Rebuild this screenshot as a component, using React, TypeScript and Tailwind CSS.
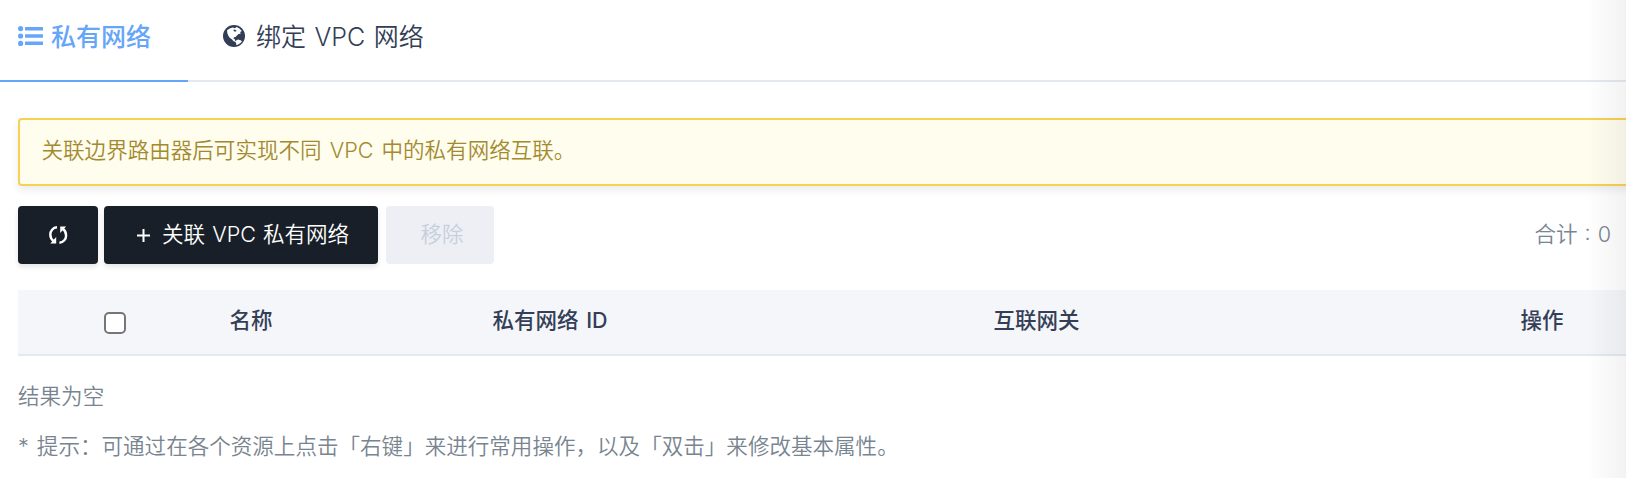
const columns = [
  { label: '名称', width: 'w-[263px]' },
  { label: '私有网络 ID', width: 'w-[501px]' },
  { label: '互联网关', width: 'w-[527px]' },
  { label: '操作', width: 'w-[105px]' },
];

function ListIcon() {
  return (
    <svg className="mt-[5px] mr-2 h-5 w-[25px]" viewBox="0 0 25 20" fill="currentColor">
      <circle cx="2.6" cy="2.6" r="2.6" />
      <circle cx="2.6" cy="10" r="2.6" />
      <circle cx="2.6" cy="17.4" r="2.6" />
      <rect x="7" y="1" width="18" height="3.6" rx="0.5" />
      <rect x="7" y="8.2" width="18" height="3.6" rx="0.5" />
      <rect x="7" y="15.4" width="18" height="3.6" rx="0.5" />
    </svg>
  );
}

function GlobeIcon() {
  return (
    <svg className="mt-1 mr-[11px] size-[22px]" viewBox="0 0 22 22">
      <circle cx="11" cy="11" r="11" fill="#323e56" />
      <path
        fill="#fff"
        d="M4 5.2 7.2 3.3 10 2.4l1.8.8 2-1.2 2.6 1.4 2.4 2.6-1.6.9.4 1.9-2.1.3-1.3 1.2-1.7 1.7-1.5.3-.6 1.2 1.5.7.2 1.5 1.4.6-.4.8-2.5-.8-1.8-2-2.1-1.5-1.5-2.2-.8-2.4z"
      />
      <path fill="#fff" d="m13 15.6 2-1 2.6.6 1.4 1-1.7 2-2.6 1.5-1.4.2-.2-1.9-.7-1z" />
      <path fill="#323e56" d="m10.6 4.6 1.6.2 1.4 1-1.4.9-1.6-.7z" />
    </svg>
  );
}

function RefreshIcon() {
  return (
    <svg className="h-[18px] w-[19px]" viewBox="0 0 19 18" fill="none" stroke="currentColor" strokeWidth="2.4">
      <path d="M8 1.3C3.8 1.6 1.3 5 1.3 8.6c0 2.8 1.2 5 3.3 6.6" />
      <path d="M10.4 16.7c4.2-.3 6.7-3.7 6.7-7.3 0-2.8-1.2-5-3.3-6.6" />
      <path d="M7.2 11v6.4H1.3zM11.2 7V.6h5.9z" fill="currentColor" stroke="none" />
    </svg>
  );
}

export default function App() {
  return (
    <div className="relative h-[478px] w-full overflow-hidden bg-white font-['Inter','Noto_Sans_CJK_SC',sans-serif] text-[21.55px] leading-[32px] font-[350] text-[#788490] [word-spacing:2px]">
      <nav className="flex h-[82px] border-b-2 border-[#e4e9f1] text-[25px] whitespace-nowrap">
        <div className="flex h-[82px] w-[188px] items-start border-b-2 border-[#66a6f8] pt-[21px] pl-[18px] font-medium text-[#66a6f8]">
          <ListIcon />
          私有网络
        </div>
        <div className="flex items-start pt-[21px] pl-[35px] text-[#323e56] [word-spacing:1.5px]">
          <GlobeIcon />
          绑定 VPC 网络
        </div>
      </nav>
      <div className="mt-9 -mr-2 ml-[18px] flex h-[68px] items-center rounded-[4px] border-2 border-[#f7d154] bg-[#fffdee] pb-1 pl-[21.5px] text-[#a38a2e] shadow-[0_4px_8px_rgba(0,0,0,0.08)]">
        <span>关联边界路由器后可实现不同 VPC 中的私有网络互联。</span>
      </div>
      <div className="mt-5 flex h-[58px] items-stretch pr-[15px] pl-[18px] whitespace-nowrap">
        <button className="flex w-20 items-center justify-center rounded-[4px] bg-[#181f28] text-white shadow-[0_3px_5px_rgba(0,0,0,0.1)]">
          <RefreshIcon />
        </button>
        <button className="ml-1.5 flex w-[274px] items-center rounded-[4px] bg-[#181f28] pb-0.5 pl-[33px] text-white shadow-[0_3px_5px_rgba(0,0,0,0.1)]">
          <svg className="mt-0.5 mr-3 size-[13px]" viewBox="0 0 13 13" stroke="currentColor" strokeWidth="2">
            <path d="M0 6.5h13M6.5 0v13" />
          </svg>
          <span className="[word-spacing:1px]">关联 VPC 私有网络</span>
        </button>
        <button className="ml-2 w-[108px] rounded-[4px] bg-[#edeff5] pb-0.5 pl-1 text-[#c6d0db]">移除</button>
        <span className="ml-auto self-center pb-0.5 [word-spacing:1px]">合计 : 0</span>
      </div>
      <div className="mt-[26px] ml-[18px] flex h-[66px] items-start border-b-2 border-[#e4e9f1] bg-[#f5f6fa] pt-[14px] text-[21.5px] font-medium whitespace-nowrap text-[#343f57]">
        <div className="w-[211.5px] shrink-0 pt-2 pl-[86px]">
          <input type="checkbox" className="block size-[22px] appearance-none rounded-[5px] border-2 border-[#767676] bg-white" />
        </div>
        {columns.map((c) => (
          <div key={c.label} className={c.width + ' shrink-0'}>{c.label}</div>
        ))}
      </div>
      <p className="mt-6 ml-[18px]">结果为空</p>
      <p className="mt-[18px] ml-[18px]">* 提示：可通过在各个资源上点击「右键」来进行常用操作，以及「双击」来修改基本属性。</p>
      <div className="pointer-events-none absolute inset-y-0 right-0 w-10 bg-gradient-to-r from-transparent to-black/5" />
    </div>
  );
}
